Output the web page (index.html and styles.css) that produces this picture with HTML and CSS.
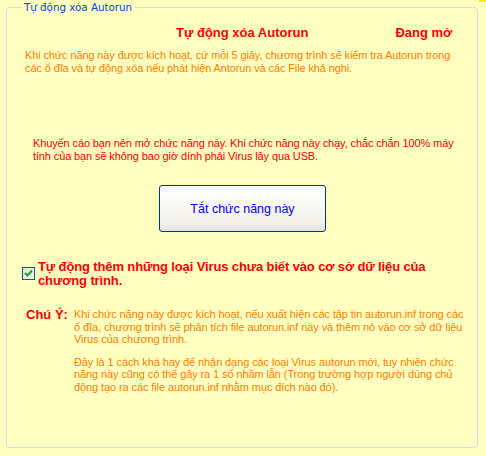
FILE: index.html
```html
<!DOCTYPE html>
<html lang="vi">
<head>
<meta charset="utf-8">
<title>Tự động xóa Autorun</title>
<link rel="stylesheet" href="styles.css">
</head>
<body>
<div class="corner"></div>
<fieldset class="group">
  <legend class="legend">Tự động xóa Autorun</legend>
  <div class="header">
    <span class="title">Tự động xóa Autorun</span>
    <span class="status">Đang mở</span>
  </div>
  <p class="desc">Khi chức năng này được kích hoạt, cứ mỗi 5 giây, chương trình sẽ kiểm tra Autorun trong<br>các ổ đĩa và tự động xóa nếu phát hiện Antorun và các File khả nghi.</p>
  <p class="advice">Khuyến cáo bạn nên mở chức năng này. Khi chức năng này chạy, chắc chắn 100% máy<br>tính của bạn sẽ không bao giờ dính phải Virus lây qua USB.</p>
  <div class="btn-row"><button class="btn">Tắt chức năng này</button></div>
  <label class="check">
    <span class="box"><svg width="9" height="9" viewBox="0 0 9 9"><path d="M1 4 L3.5 6.5 L8 1.5" fill="none" stroke="#21A121" stroke-width="2"/></svg></span>
    <span class="check-text">Tự động thêm những loại Virus chưa biết vào cơ sở dữ liệu của<br>chương trình.</span>
  </label>
  <div class="note">
    <span class="note-label">Chú Ý:</span>
    <div class="note-body">
      <p>Khi chức năng này được kích hoạt, nếu xuất hiện các tập tin autorun.inf trong các<br>ổ đĩa, chương trình sẽ phân tích file autorun.inf này và thêm nó vào cơ sở dữ liệu<br>Virus của chương trình.</p>
      <p>Đây là 1 cách khá hay để nhận dạng các loại Virus autorun mới, tuy nhiên chức<br>năng này cũng có thể gây ra 1 số nhầm lẫn (Trong trường hợp người dùng chủ<br>động tạo ra các file autorun.inf nhằm mục đích nào đó).</p>
    </div>
  </div>
</fieldset>
</body>
</html>
```
FILE: styles.css
```css
html, body {
  margin: 0;
  padding: 0;
  background: #FFFFC0;
  width: 486px;
  height: 456px;
  overflow: hidden;
  font-family: "Liberation Sans", "DejaVu Sans", sans-serif;
  font-size: 11px;
}
.corner {
  position: absolute;
  top: 0;
  right: 0;
  width: 7px;
  height: 2px;
  background: #FFE800;
}
.group {
  margin: 1px 0 0 6px;
  width: 472px;
  height: 447px;
  box-sizing: border-box;
  border: 1px solid #D0DCEC;
  border-radius: 4px;
  padding: 0;
}
.legend {
  margin-left: 15px;
  padding: 0 2px 0 2px;
  color: #0046D5;
  font-family: "DejaVu Sans", "Liberation Sans", sans-serif;
  font-size: 10.3px;
  line-height: 13px;
}
.header {
  display: flex;
  margin-top: 10px;
  height: 16px;
  align-items: center;
  font-weight: bold;
  font-size: 13px;
  color: #FF0000;
}
.title { margin-left: 169px; }
.status { margin-left: 87px; }
p { margin: 0; }
.desc {
  margin: 9px 0 0 18px;
  color: #FF8000;
  line-height: 13px;
  letter-spacing: -0.12px;
}
.advice {
  margin: 62px 0 0 26px;
  color: #FF0000;
  line-height: 13px;
  letter-spacing: -0.12px;
}
.btn-row {
  margin-top: 22px;
  padding-left: 152px;
}
.btn {
  width: 167px;
  height: 47px;
  border: 1px solid #003C74;
  border-radius: 3px;
  background: linear-gradient(#FFFFFF, #F3F2EC 80%, #E3E1D8);
  color: #0000FF;
  font-family: inherit;
  font-size: 12.5px;
}
.check {
  display: flex;
  align-items: flex-start;
  margin: 28px 0 0 15px;
  color: #FF0000;
  font-weight: bold;
  font-size: 13px;
  line-height: 14px;
  letter-spacing: -0.13px;
}
.box {
  width: 11px;
  height: 11px;
  border: 1px solid #1C5180;
  background: linear-gradient(135deg, #DCDCD7, #FFFFFF);
  margin: 7px 3px 0 0;
  display: flex;
  align-items: center;
  justify-content: center;
  flex: none;
}
.note {
  display: flex;
  margin: 20px 0 0 19px;
}
.note-label {
  width: 48px;
  color: #FF0000;
  font-weight: bold;
  font-size: 13px;
  line-height: 13px;
  flex: none;
}
.note-body {
  color: #FF8000;
  line-height: 12.5px;
  letter-spacing: -0.1px;
}
.note-body p + p { margin-top: 10px; }
```
